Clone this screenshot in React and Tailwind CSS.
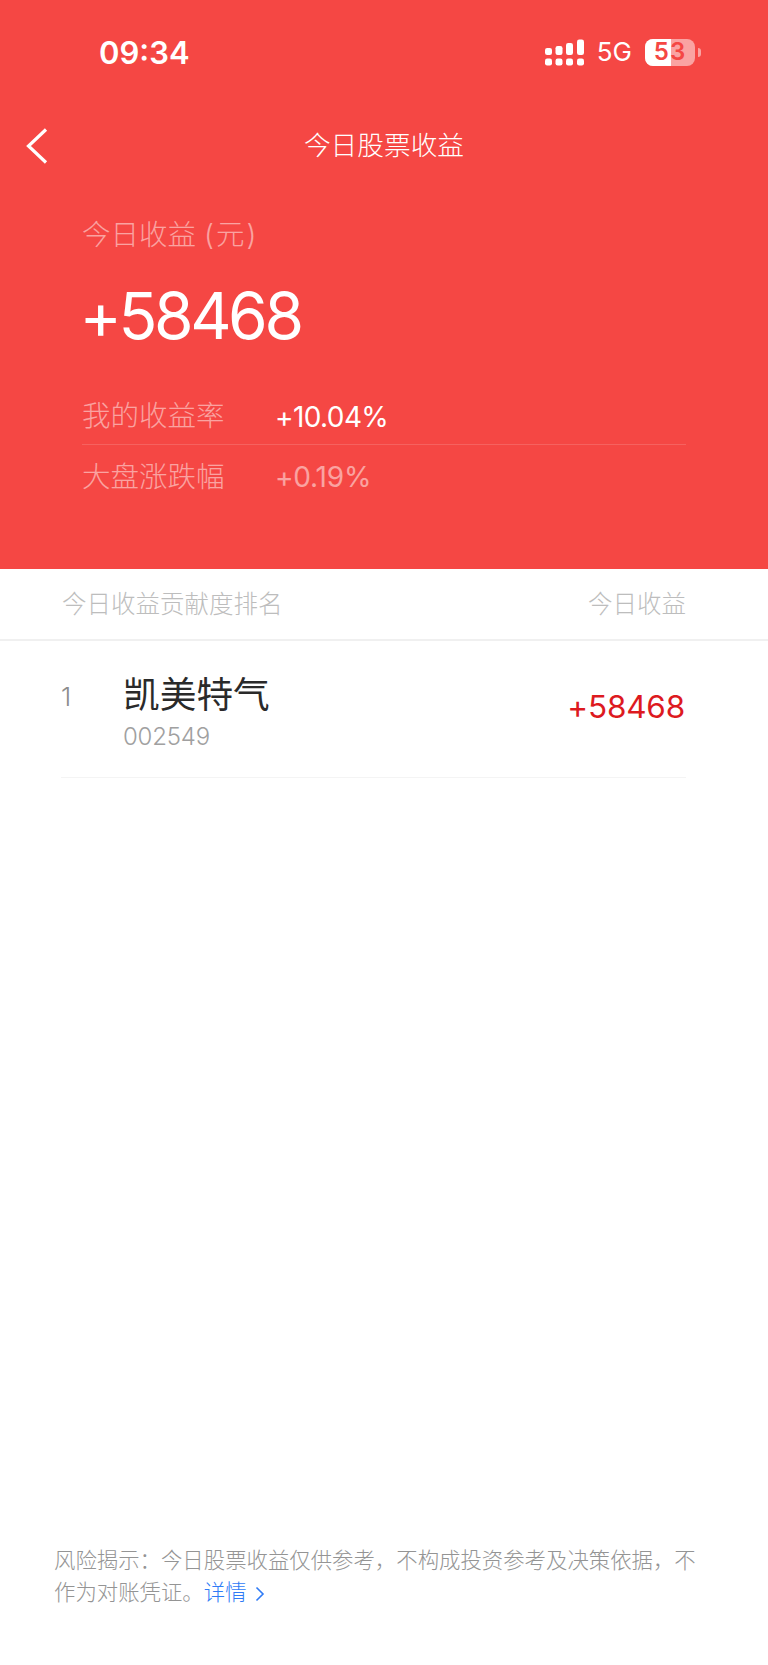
import React from "react";

function Signal() {
  const cols = [
    [545, 47, 7],
    [555.5, 45, 9],
    [566, 42, 12],
    [577, 38.5, 15.5],
  ];
  return (
    <svg width="40" height="27" viewBox="544 38 40 27" className="block">
      {cols.map(([x, y, h]) => (
        <g key={x} fill="#fff">
          <rect x={x} y={y} width="7" height={h} rx="2.2" />
          <rect x={x} y="57.5" width="7" height="7" rx="2.2" />
        </g>
      ))}
    </svg>
  );
}

function Battery() {
  return (
    <div className="flex items-center">
      <div className="relative w-[50px] h-[27px]">
        <div className="absolute inset-0 rounded-[8px] bg-white/50" />
        <div className="absolute left-0 top-0 h-full w-[26px] rounded-l-[8px] bg-white" />
        <div className="relative h-full flex items-center justify-center text-[24px] font-semibold text-[#f54744] leading-none tracking-[1px]">
          53
        </div>
      </div>
      <div className="ml-[3px] w-[3px] h-[9px] rounded-r-[3px] bg-white/50" />
    </div>
  );
}

function App() {
  return (
    <div className="w-[768px] h-[1665px] flex flex-col bg-white overflow-hidden font-['Inter','Noto_Sans_CJK_SC',sans-serif]">
      <header className="h-[569px] bg-[#f54744] text-white">
        <div className="h-[104px] flex items-center justify-between pl-[99px] pr-[67px]">
          <span className="text-[31px] font-semibold leading-none">09:34</span>
          <div className="flex items-center">
            <Signal />
            <span className="ml-[13px] mr-[13px] text-[26px] leading-none">5G</span>
            <Battery />
          </div>
        </div>
        <div className="h-[84px] grid grid-cols-[1fr_auto_1fr] items-center pl-[26px]">
          <svg width="22" height="36" viewBox="0 0 22 36" fill="none" className="block">
            <path d="M20 1.5 L2.5 18 L20 34.5" stroke="#fff" strokeWidth="3.2" />
          </svg>
          <span className="text-[26.7px] font-light leading-none mr-[26px] -mt-[1px]">今日股票收益</span>
          <span />
        </div>
        <div className="pl-[82px] pr-[82px]">
          <div className="mt-[27px] h-[40px] flex items-center text-[28.5px] font-light text-white/50 leading-none">
            今日收益 <span className="ml-[8px] tracking-[2px]">(元)</span>
          </div>
          <div className="mt-[26px] -ml-[2.5px] h-[70px] flex items-center text-[64px] tracking-[-3.4px] leading-none">
            +58468
          </div>
          <div className="mt-[38px] h-[56px] flex items-center border-b border-white/15 text-[28.5px] leading-none">
            <span className="w-[193px] font-light text-white/50">我的收益率</span>
            <span className="text-[28px] tracking-[-0.6px]">+10.04%</span>
          </div>
          <div className="h-[64px] flex items-center text-[28.5px] leading-none text-white/50">
            <span className="w-[193px] font-light">大盘涨跌幅</span>
            <span className="text-[28px] tracking-[-0.2px]">+0.19%</span>
          </div>
        </div>
      </header>

      <div className="h-[72px] flex items-center justify-between pl-[62px] pr-[82px] border-b-2 border-[#f0f0f0] text-[24.5px] font-light text-[#bdbdbd] leading-none">
        <span>今日收益贡献度排名</span>
        <span>今日收益</span>
      </div>

      <div className="ml-[61px] mr-[82px] h-[137px] border-b border-[#f4f4f4] flex items-center">
        <span className="w-[62px] text-[26px] font-light text-[#8c8c8c] leading-none -mt-[24px]">1</span>
        <div className="flex-1 mt-[6px]">
          <div className="text-[36.7px] leading-[42px] text-[#2a2a2a] font-normal">凯美特气</div>
          <div className="mt-[7px] text-[24px] tracking-[-0.2px] leading-[28px] text-[#a0a0a0] font-light">002549</div>
        </div>
        <span className="text-[31.5px] tracking-[-0.2px] leading-none text-[#dd1a1f] font-normal -mt-[4px] mr-[1px]">+58468</span>
      </div>

      <footer className="mt-auto px-[54px] pb-[57px] text-[21.4px] leading-[32px] font-light text-[#949494]">
        <p>
          风险揭示：今日股票收益仅供参考，不构成投资参考及决策依据，不作为对账凭证。
          <span className="text-[#2f7bf6]">详情</span>
          <svg width="10" height="16" viewBox="0 0 10 16" fill="none" className="ml-[8px] inline-block align-[-2px]">
            <path d="M1.5 1.5 L8 8 L1.5 14.5" stroke="#2f7bf6" strokeWidth="1.6" />
          </svg>
        </p>
      </footer>
    </div>
  );
}

export default App;
